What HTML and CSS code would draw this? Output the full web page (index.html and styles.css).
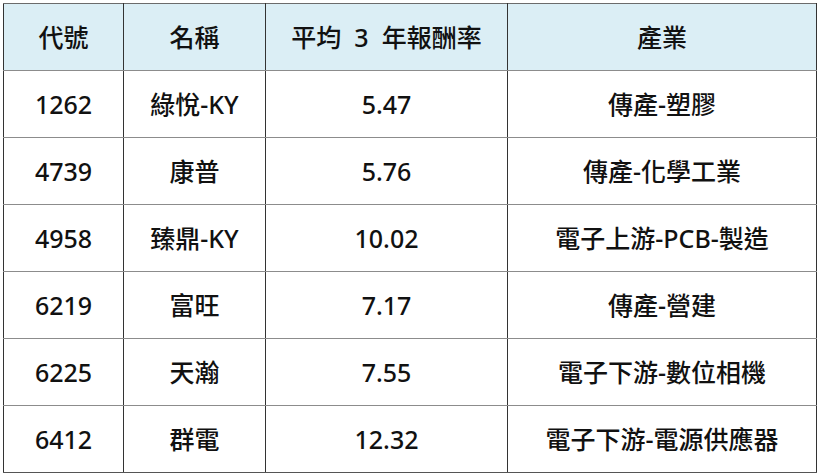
FILE: index.html
```html
<!DOCTYPE html>
<html lang="zh-Hant">
<head>
<meta charset="utf-8">
<title>平均 3 年報酬率</title>
<link rel="stylesheet" href="styles.css">
</head>
<body>
<table class="data">
  <colgroup>
    <col class="c1"><col class="c2"><col class="c3"><col class="c4">
  </colgroup>
  <thead>
    <tr><th>代號</th><th>名稱</th><th>平均&nbsp; 3&nbsp; 年報酬率</th><th>產業</th></tr>
  </thead>
  <tbody>
    <tr><td>1262</td><td>綠悅-KY</td><td>5.47</td><td>傳產-塑膠</td></tr>
    <tr><td>4739</td><td>康普</td><td>5.76</td><td>傳產-化學工業</td></tr>
    <tr><td>4958</td><td>臻鼎-KY</td><td>10.02</td><td>電子上游-PCB-製造</td></tr>
    <tr><td>6219</td><td>富旺</td><td>7.17</td><td>傳產-營建</td></tr>
    <tr><td>6225</td><td>天瀚</td><td>7.55</td><td>電子下游-數位相機</td></tr>
    <tr><td>6412</td><td>群電</td><td>12.32</td><td>電子下游-電源供應器</td></tr>
  </tbody>
</table>
</body>
</html>
```
FILE: styles.css
```css
html, body {
  margin: 0;
  padding: 0;
  background: #ffffff;
}
body {
  padding: 3px 0 0 3px;
  font-family: "Noto Sans", "Noto Sans CJK TC", sans-serif;
  color: #111111;
}
.data {
  border-collapse: collapse;
  table-layout: fixed;
  width: 813px;
}
.c1 { width: 120px; }
.c2 { width: 142px; }
.c3 { width: 242px; }
.c4 { width: 309px; }
.data th,
.data td {
  height: 66px;
  padding: 0;
  text-align: center;
  vertical-align: middle;
  font-size: 25px;
  font-weight: 500;
  line-height: 1;
  border-left: 1px solid #333333;
  border-right: 1px solid #333333;
  border-top: 1px solid #8c8c8c;
  border-bottom: 1px solid #8c8c8c;
}
.data th {
  background: #dbeef5;
}
.data tr:first-child th { border-top-color: #6b6b6b; }
.data tbody tr:last-child td { border-bottom-color: #555555; }
```
